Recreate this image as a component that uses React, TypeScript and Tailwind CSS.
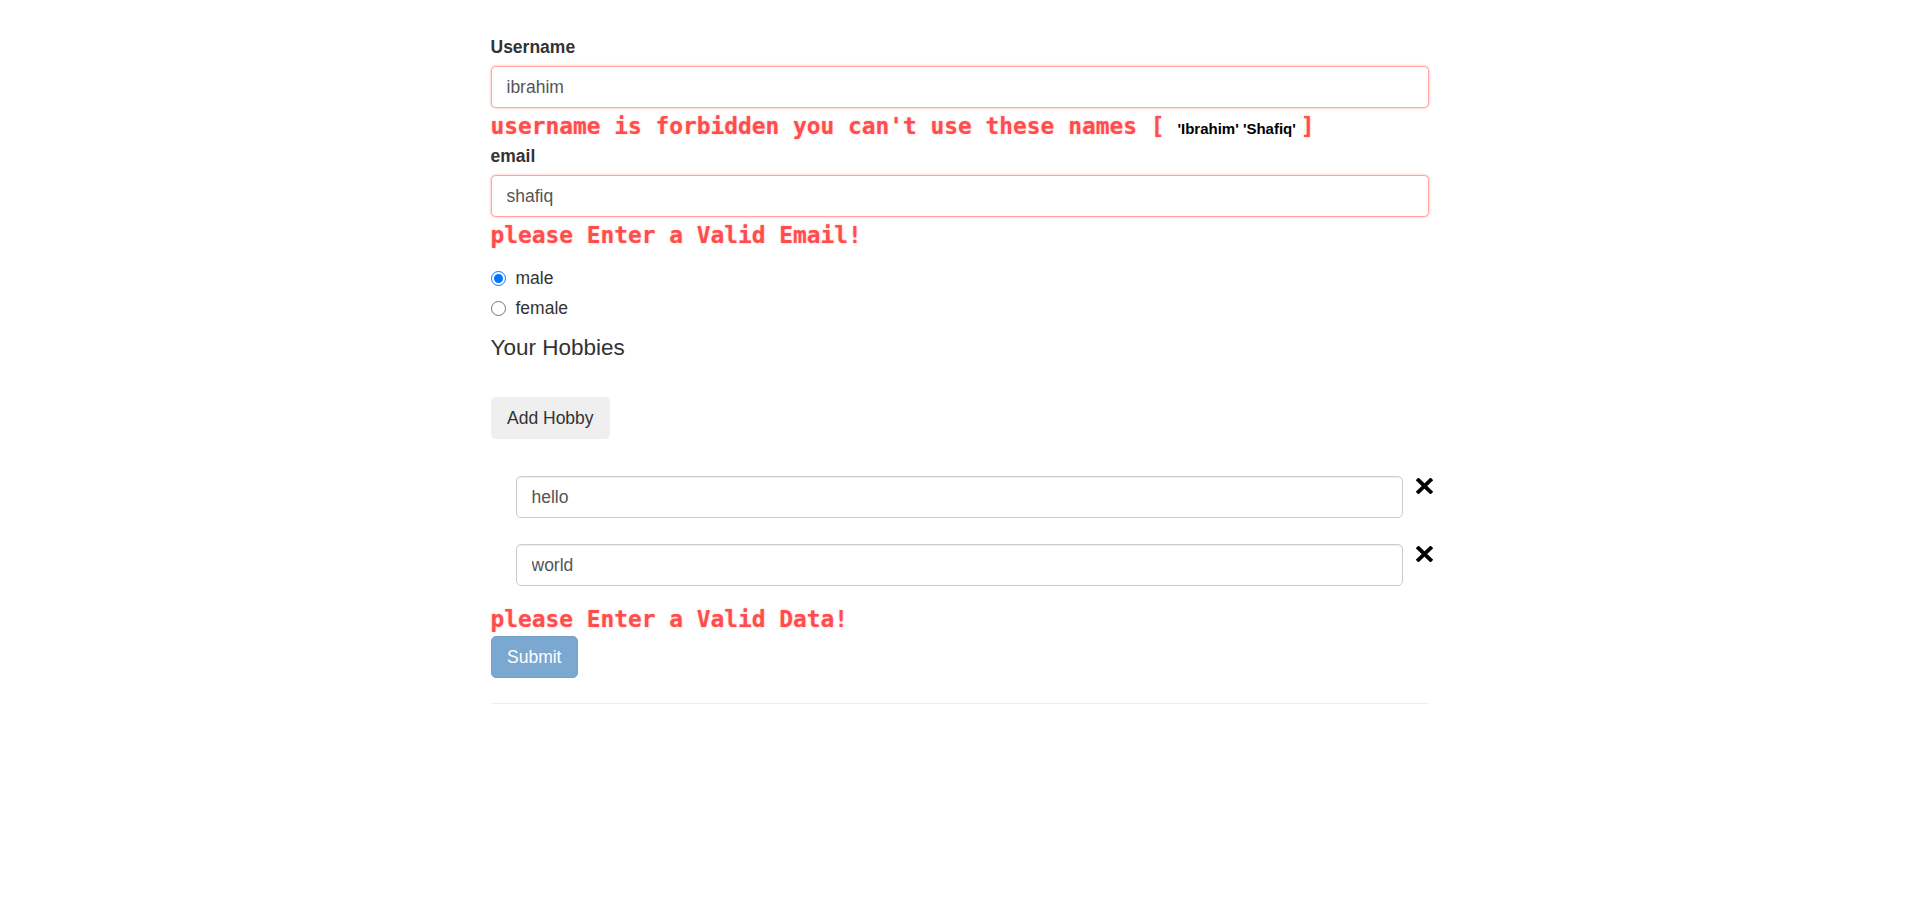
const sans = "font-['Liberation_Sans',Arial,sans-serif]";
const mono = "font-['DejaVu_Sans_Mono','Liberation_Mono',monospace]";

const errorText =
  "block text-[22.85px] font-bold text-[#ff4d4d] [text-shadow:0_0_2px_rgba(255,77,77,0.45)] whitespace-pre " + mono;

const hobbies = ["hello", "world"];

function RemoveIcon() {
  return (
    <svg width="17" height="16" viewBox="0 0 17 16" className="block">
      <path d="M2.5 2.2 L14.5 13.8 M14.5 2.2 L2.5 13.8" stroke="#000" strokeWidth="3.8" strokeLinecap="square" fill="none" />
    </svg>
  );
}

export default function App() {
  return (
    <div className={"min-h-[904px] bg-white text-[#333] " + sans}>
      <div className="w-[938px] mx-auto pt-[35px]">
        {/* Username */}
        <label className="block text-[17.5px] leading-[25px] font-bold mb-[6.25px]">Username</label>
        <input
          readOnly
          value="ibrahim"
          className="block w-full h-[42px] px-[15px] text-[17.5px] text-[#555] bg-white border border-[#ffa3a3] rounded-[5px] shadow-[0_0_3px_rgba(255,120,120,0.6)] outline-none"
        />
        <span className={errorText + " h-[35.5px] leading-[36px]"}>
          username is forbidden you can't use these names [
          <span className={"ml-[13px] mr-[5px] text-[15px] leading-none text-black [text-shadow:none] " + sans}>
            'Ibrahim' 'Shafiq'
          </span>
          ]
        </span>

        {/* Email */}
        <label className="block text-[17.5px] leading-[25px] font-bold mb-[6.25px]">email</label>
        <input
          readOnly
          value="shafiq"
          className="block w-full h-[42px] px-[15px] text-[17.5px] text-[#555] bg-white border border-[#ffa3a3] rounded-[5px] shadow-[0_0_3px_rgba(255,120,120,0.6)] outline-none"
        />
        <span className={errorText + " h-[36px] leading-[36px]"}>please Enter a Valid Email!</span>

        {/* Gender */}
        <div className="mt-[12.5px] flex flex-col gap-[5.5px]">
          <label className="flex items-center h-[25px] text-[17.5px]">
            <input type="radio" name="gender" defaultChecked className="w-[15px] h-[15px] m-0 mr-[10px] accent-[#0075ff]" />
            male
          </label>
          <label className="flex items-center h-[25px] text-[17.5px]">
            <input type="radio" name="gender" className="w-[15px] h-[15px] m-0 mr-[10px]" />
            female
          </label>
        </div>

        <h4 className="mt-[14.5px] text-[22.5px] leading-[24.75px] font-normal">Your Hobbies</h4>

        <button className="mt-[37px] h-[42px] px-[16.5px] rounded-[5px] bg-[#efefef] text-[17.5px] text-[#333]">
          Add Hobby
        </button>

        {/* Hobby list */}
        <div className="mt-[37px] flex flex-col gap-[26px]">
          {hobbies.map((h) => (
            <div key={h} className="flex items-start">
              <input
                readOnly
                value={h}
                className="shrink-0 ml-[25px] w-[887px] h-[42px] px-[15px] text-[17.5px] text-[#555] bg-white border border-[#ccc] rounded-[5px] shadow-[inset_0_1px_1px_rgba(0,0,0,0.075)] outline-none"
              />
              <span className="shrink-0 ml-[13px] mt-[2px]">
                <RemoveIcon />
              </span>
            </div>
          ))}
        </div>

        <span className={errorText + " mt-[16.5px] h-[33px] leading-[33px]"}>please Enter a Valid Data!</span>

        <button className="block h-[42px] px-[15.5px] rounded-[5px] bg-[#7aa8d0] border border-[#77a0c4] text-[17.5px] text-white">
          Submit
        </button>

        <hr className="mt-[25px] border-0 border-t border-[#eee]" />
      </div>
    </div>
  );
}
